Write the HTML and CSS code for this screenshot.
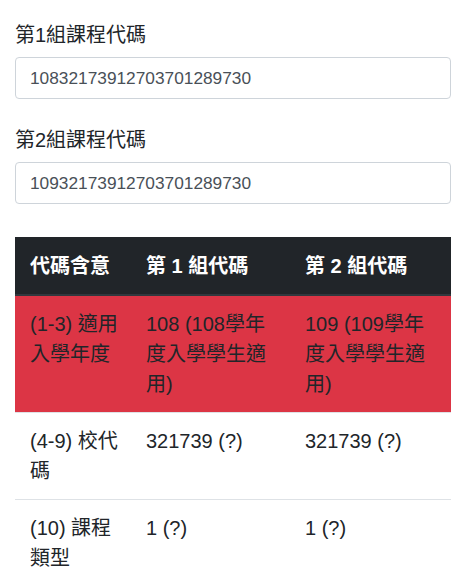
FILE: index.html
```html
<!DOCTYPE html>
<html lang="zh-Hant">
<head>
<meta charset="utf-8">
<link rel="stylesheet" href="styles.css">
</head>
<body>
<div class="container">
  <div class="form-group">
    <label class="label">第1組課程代碼</label>
    <input class="input" type="text" value="10832173912703701289730">
  </div>
  <div class="form-group">
    <label class="label">第2組課程代碼</label>
    <input class="input" type="text" value="10932173912703701289730">
  </div>
  <table class="table">
    <colgroup>
      <col class="c1"><col class="c2"><col class="c3">
    </colgroup>
    <thead>
      <tr><th>代碼含意</th><th>第 1 組代碼</th><th>第 2 組代碼</th></tr>
    </thead>
    <tbody>
      <tr class="danger"><td>(1-3) 適用入學年度</td><td>108 (108學年度入學學生適用)</td><td>109 (109學年度入學學生適用)</td></tr>
      <tr><td>(4-9) 校代碼</td><td>321739 (?)</td><td>321739 (?)</td></tr>
      <tr><td>(10) 課程類型</td><td>1 (?)</td><td>1 (?)</td></tr>
    </tbody>
  </table>
</div>
</body>
</html>
```
FILE: styles.css
```css
html, body {
  margin: 0;
  padding: 0;
  background: #fff;
}
body {
  font-family: "Liberation Sans", Arial, "Noto Sans CJK TC", sans-serif;
  font-size: 20px;
  line-height: 1.5;
  color: #212529;
}
.container {
  padding: 20px 15px 0 15px;
  width: 436px;
}
.form-group {
  display: flex;
  flex-direction: column;
  margin-bottom: 26px;
}
.label {
  display: block;
  margin-bottom: 7px;
}
.input {
  box-sizing: border-box;
  width: 436px;
  height: 42px;
  padding: 6px 14px;
  font-family: "Liberation Sans", Arial, sans-serif;
  font-size: 17.3px;
  line-height: 27px;
  color: #495057;
  background: #fff;
  border: 1px solid #ced4da;
  border-radius: 4px;
  outline: none;
}
.table {
  margin-top: 33px;
  width: 436px;
  border-collapse: collapse;
  table-layout: fixed;
}
.c1 { width: 117px; }
.c2 { width: 159px; }
.c3 { width: 160px; }
.table th,
.table td {
  padding: 13px 14px 13px 15px;
  text-align: left;
  vertical-align: top;
  border-top: 1px solid #dee2e6;
}
.table th + th,
.table td + td {
  padding-left: 14px;
}
.table thead th {
  padding-top: 13.5px;
  padding-bottom: 13.5px;
  background: #212529;
  color: #fff;
  font-weight: bold;
  border-top: 0;
  border-bottom: 2px solid #32383e;
}
.table tbody tr:first-child td {
  border-top: 0;
}
.table .danger td {
  background: #dc3545;
}
```
